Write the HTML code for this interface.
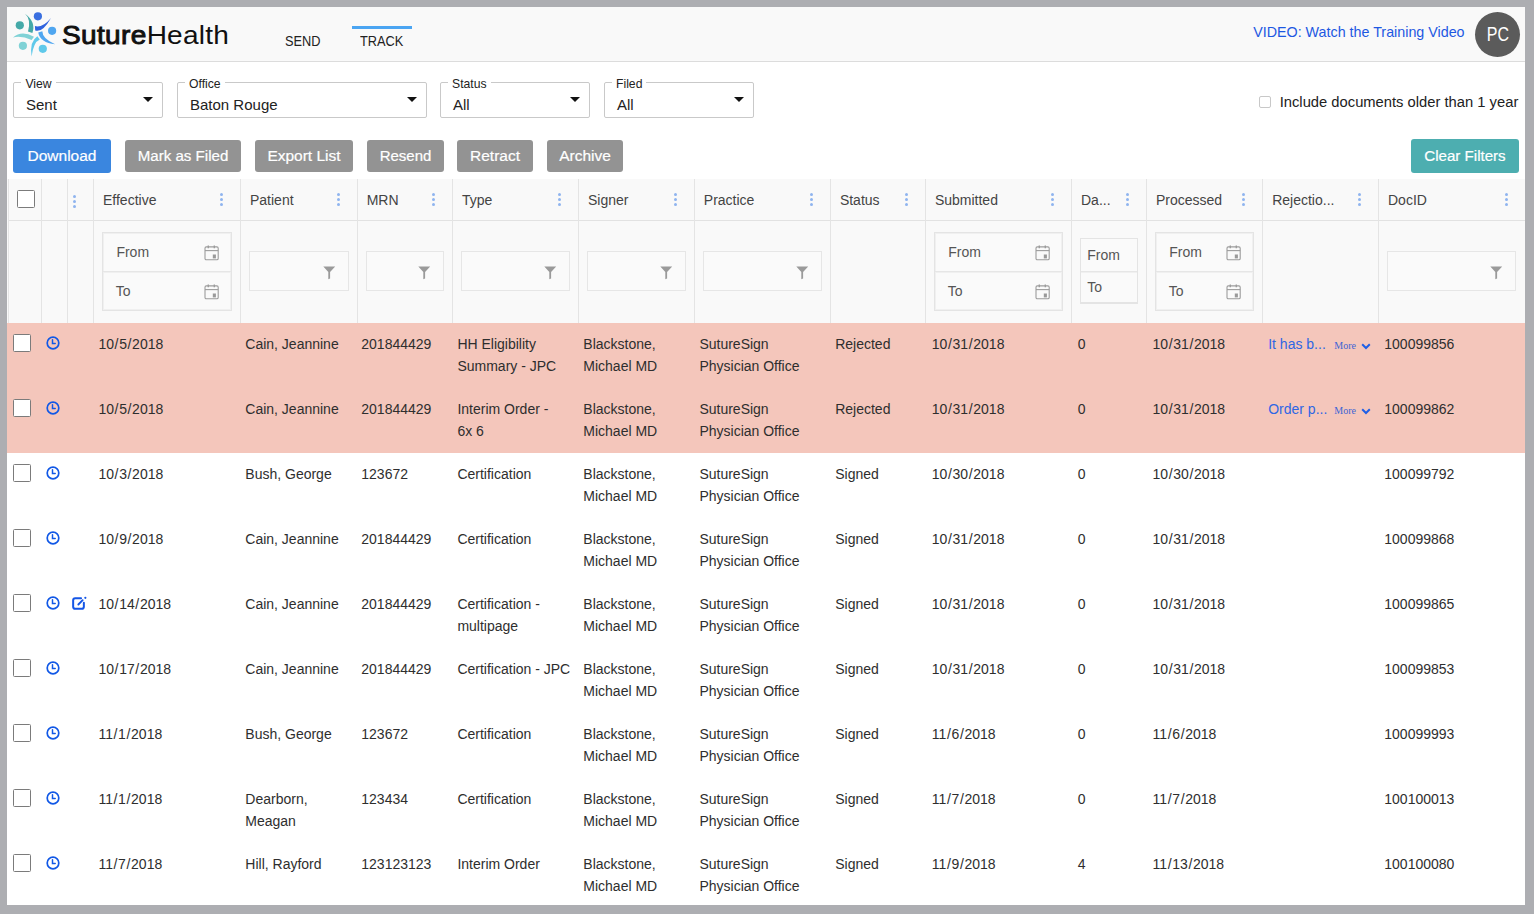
<!DOCTYPE html><html><head><meta charset="utf-8"><title>SutureHealth Track</title><style>
*{box-sizing:border-box;margin:0;padding:0}
html,body{width:1534px;height:914px;overflow:hidden;background:#adaeb2;font-family:"Liberation Sans",sans-serif;color:#333}
#pg{position:absolute;left:7px;top:7px;width:1518px;height:898px;background:#fff;overflow:hidden}
.a{position:absolute;white-space:nowrap}
.a>svg{display:block}
#hdr{position:absolute;left:0;top:0;width:1518px;height:55px;background:#f9f9f9;border-bottom:1px solid #dcdcdc}
.sel{position:absolute;height:36px;border:1px solid #c9c9c9;border-radius:2px;background:#fff}
.sel .lb{position:absolute;top:-6.5px;background:#fff;padding:0 4px;font-size:12.2px;line-height:15px;color:#222}
.sel .vl{position:absolute;top:13px;font-size:15px;line-height:18px;color:#222}
.sel .ar{position:absolute;top:14px;width:0;height:0;border-left:5px solid transparent;border-right:5px solid transparent;border-top:5.5px solid #111}
.btn{position:absolute;height:32px;top:133px;background:#939393;color:#fff;border-radius:3px;font-size:15.5px;line-height:32px;text-align:center;-webkit-text-stroke:0.2px #fff}
.vl1{position:absolute;width:1px;background:#e4e4e4}
.hl{position:absolute;color:#444;font-size:14px;line-height:20px}
.dots{position:absolute;width:3px}
.dots i{display:block;width:3px;height:3px;border-radius:50%;background:#8fb4ef;margin-bottom:2px}
.fbox{position:absolute;border:1px solid #e6e6e6;background:#fafafa}
.dbox{position:absolute;border:1px solid #e4e4e4;box-shadow:inset 0 0 0 1px #f0f0f0;background:#fafafa}
.dbox.sm{box-shadow:none;border-bottom-width:2px}
.dbox .in{position:absolute;left:0;right:0;height:1px;background:#e6e6e6;box-shadow:0 1px 0 #f0f0f0}
.dbox .t{position:absolute;font-size:14px;line-height:18px;color:#555}
.row{position:absolute;left:0;width:1518px;height:65px}
.pink{background:#f4c6bb}
.cb{position:absolute;width:18px;height:18px;border:1.6px solid #7b7b7b;border-radius:1.5px;background:#fff}
.cell{position:absolute;font-size:14px;line-height:22px;color:#2e2e2e;white-space:nowrap}
.sl{margin:0 0.65px}
.rej{color:#2f66e4}
.more{font-family:"Liberation Serif",serif;font-size:10px;color:#3d64d4}
</style></head><body><div id="pg">
<div id="hdr"></div>
<svg class="a" style="left:3px;top:3px" width="50" height="50" viewBox="0 0 50 50">
<circle cx="27.9" cy="6.3" r="4.1" fill="#3a6fe0"/>
<circle cx="9.8" cy="15.3" r="4.1" fill="#45a9a8"/>
<circle cx="42.1" cy="20.8" r="4.1" fill="#4fa6f0"/>
<circle cx="12.9" cy="35.8" r="4.1" fill="#80d2d6"/>
<circle cx="32.8" cy="38.8" r="4.1" fill="#5fc9ea"/>
<path d="M15 3.8 Q26.2 12 22.4 23 L18 21.6 Q21.3 9.1 15 3.8Z" fill="#45a9a8"/>
<path d="M41 7.9 Q32.5 23 25.2 20.5 L24.9 16.1 Q32.65 18 41 7.9Z" fill="#2f62de"/>
<path d="M45.1 34.2 Q32.5 29.05 32.3 21.3 L28.2 22.4 Q30.35 32.7 45.1 34.2Z" fill="#4fa6f0"/>
<path d="M3 27.4 Q11.7 19.9 24 26.8 L21.6 30.1 Q11.7 25.45 3 27.4Z" fill="#80d2d6"/>
<path d="M21.6 46.5 Q19.3 31.4 27.4 26.3 L29.8 29.5 Q23.5 32 21.6 46.5Z" fill="#5fc9ea"/>
</svg>
<div class="a" style="left:54.5px;top:12.5px;font-size:25.5px;line-height:30px;color:#111;transform:scaleX(1.1);transform-origin:0 0"><span style="-webkit-text-stroke:0.9px #111;letter-spacing:0.3px">Suture</span><span style="letter-spacing:0.2px">Health</span></div>
<div class="a" style="left:278px;top:25.5px;font-size:14.5px;line-height:16px;color:#222;transform:scaleX(0.88);transform-origin:0 0">SEND</div>
<div class="a" style="left:352.7px;top:25.5px;font-size:14.5px;line-height:16px;color:#222;transform:scaleX(0.88);transform-origin:0 0">TRACK</div>
<div class="a" style="left:345px;top:19px;width:60px;height:3px;background:#4ba5f2"></div>
<div class="a" style="left:1246.2px;top:15.5px;font-size:14.3px;line-height:18px;color:#1d58e2">VIDEO: Watch the Training Video</div>
<div class="a" style="left:1468px;top:5.2px;width:45px;height:45px;border-radius:50%;background:#5b5b5b;color:#fff;font-size:20px;line-height:45px;text-align:center"><span style="display:inline-block;transform:scaleX(0.8)">PC</span></div>
<div class="sel" style="left:6px;top:75px;width:150px"><div class="lb" style="left:7.4px">View</div><div class="vl" style="left:12px">Sent</div><div class="ar" style="left:129px"></div></div>
<div class="sel" style="left:170px;top:75px;width:250px"><div class="lb" style="left:7px">Office</div><div class="vl" style="left:12px">Baton Rouge</div><div class="ar" style="left:229px"></div></div>
<div class="sel" style="left:433px;top:75px;width:150px"><div class="lb" style="left:7px">Status</div><div class="vl" style="left:12px">All</div><div class="ar" style="left:129px"></div></div>
<div class="sel" style="left:597px;top:75px;width:150px"><div class="lb" style="left:7px">Filed</div><div class="vl" style="left:12px">All</div><div class="ar" style="left:129px"></div></div>
<div class="a" style="left:1252.1px;top:89px;width:12px;height:12px;border:1px solid #c8c8c8;border-radius:2px;background:#fff"></div>
<div class="a" style="left:1272.7px;top:86px;font-size:14.75px;line-height:18px;color:#222">Include documents older than 1 year</div>
<div class="btn" style="left:6px;width:98px;background:#3a86df;font-size:15.5px;height:34px;line-height:34px;top:132px;">Download</div>
<div class="btn" style="left:118px;width:116px;background:#939393;font-size:15.1px;top:133px;">Mark as Filed</div>
<div class="btn" style="left:248px;width:98px;background:#939393;font-size:15.5px;top:133px;">Export List</div>
<div class="btn" style="left:360px;width:77px;background:#939393;font-size:15px;top:133px;">Resend</div>
<div class="btn" style="left:450px;width:76px;background:#939393;font-size:15.5px;top:133px;">Retract</div>
<div class="btn" style="left:540px;width:76px;background:#939393;font-size:15.5px;top:133px;">Archive</div>
<div class="btn" style="left:1404px;width:108px;background:#4daeb0;font-size:15.1px;height:33.4px;line-height:33.4px;top:132.2px;">Clear Filters</div>
<div class="a" style="left:0px;top:172px;width:1518px;height:143.5px;background:#f9f9f9"></div>
<div class="a" style="left:1px;top:213px;width:1517px;height:1px;background:#e2e2e2"></div>
<div class="vl1" style="left:1px;top:172px;height:143.5px"></div>
<div class="vl1" style="left:34px;top:172px;height:143.5px"></div>
<div class="vl1" style="left:60px;top:172px;height:143.5px"></div>
<div class="vl1" style="left:86px;top:172px;height:143.5px"></div>
<div class="vl1" style="left:233px;top:172px;height:143.5px"></div>
<div class="vl1" style="left:350px;top:172px;height:143.5px"></div>
<div class="vl1" style="left:445px;top:172px;height:143.5px"></div>
<div class="vl1" style="left:571px;top:172px;height:143.5px"></div>
<div class="vl1" style="left:687px;top:172px;height:143.5px"></div>
<div class="vl1" style="left:823px;top:172px;height:143.5px"></div>
<div class="vl1" style="left:918px;top:172px;height:143.5px"></div>
<div class="vl1" style="left:1064px;top:172px;height:143.5px"></div>
<div class="vl1" style="left:1139px;top:172px;height:143.5px"></div>
<div class="vl1" style="left:1255px;top:172px;height:143.5px"></div>
<div class="vl1" style="left:1371px;top:172px;height:143.5px"></div>
<div class="hl" style="left:96.0px;top:183.2px">Effective</div>
<div class="hl" style="left:243.0px;top:183.2px">Patient</div>
<div class="hl" style="left:359.7px;top:183.2px">MRN</div>
<div class="hl" style="left:455.0px;top:183.2px">Type</div>
<div class="hl" style="left:581.0px;top:183.2px">Signer</div>
<div class="hl" style="left:696.8px;top:183.2px">Practice</div>
<div class="hl" style="left:832.9px;top:183.2px">Status</div>
<div class="hl" style="left:927.9px;top:183.2px">Submitted</div>
<div class="hl" style="left:1074.0px;top:183.2px">Da...</div>
<div class="hl" style="left:1148.9px;top:183.2px">Processed</div>
<div class="hl" style="left:1265.2px;top:183.2px">Rejectio...</div>
<div class="hl" style="left:1381.0px;top:183.2px">DocID</div>
<div class="dots" style="left:213.0px;top:186px"><i></i><i></i><i></i></div>
<div class="dots" style="left:329.7px;top:186px"><i></i><i></i><i></i></div>
<div class="dots" style="left:425.0px;top:186px"><i></i><i></i><i></i></div>
<div class="dots" style="left:551.0px;top:186px"><i></i><i></i><i></i></div>
<div class="dots" style="left:666.8px;top:186px"><i></i><i></i><i></i></div>
<div class="dots" style="left:802.9px;top:186px"><i></i><i></i><i></i></div>
<div class="dots" style="left:897.9px;top:186px"><i></i><i></i><i></i></div>
<div class="dots" style="left:1044.0px;top:186px"><i></i><i></i><i></i></div>
<div class="dots" style="left:1118.9px;top:186px"><i></i><i></i><i></i></div>
<div class="dots" style="left:1235.2px;top:186px"><i></i><i></i><i></i></div>
<div class="dots" style="left:1351.0px;top:186px"><i></i><i></i><i></i></div>
<div class="dots" style="left:1497.5px;top:186px"><i></i><i></i><i></i></div>
<div class="dots" style="left:66.0px;top:188px"><i></i><i></i><i></i></div>
<div class="cb" style="left:10px;top:183px"></div>
<div class="dbox" style="left:95px;top:225px;width:130px;height:79px"><div class="in" style="top:38px"></div></div>
<div class="dbox" style="left:927px;top:225px;width:129px;height:79px"><div class="in" style="top:38px"></div></div>
<div class="dbox" style="left:1148px;top:225px;width:99px;height:79px"><div class="in" style="top:38px"></div></div>
<div class="dbox sm" style="left:1073px;top:231px;width:58px;height:66px"><div class="in" style="top:31.5px"></div></div>
<div class="a" style="left:109.4px;top:236px;font-size:14px;line-height:18px;color:#555">From</div>
<div class="a" style="left:108.8px;top:274.5px;font-size:14px;line-height:18px;color:#555">To</div>
<div class="a" style="left:197.1px;top:237.5px"><svg width="15" height="16" viewBox="0 0 15 16"><rect x="1" y="1.9" width="13.2" height="12.8" rx="1.3" fill="none" stroke="#9c9c9c" stroke-width="1.1"/><path d="M1 5.6H14.2" stroke="#9c9c9c" stroke-width="1.1"/><path d="M4.3 0.6V3.2M10.3 0.6V3.2" stroke="#9c9c9c" stroke-width="1.4"/><rect x="8.8" y="9.5" width="3.1" height="3.9" fill="#9a9a9a"/></svg></div>
<div class="a" style="left:197.1px;top:276.5px"><svg width="15" height="16" viewBox="0 0 15 16"><rect x="1" y="1.9" width="13.2" height="12.8" rx="1.3" fill="none" stroke="#9c9c9c" stroke-width="1.1"/><path d="M1 5.6H14.2" stroke="#9c9c9c" stroke-width="1.1"/><path d="M4.3 0.6V3.2M10.3 0.6V3.2" stroke="#9c9c9c" stroke-width="1.4"/><rect x="8.8" y="9.5" width="3.1" height="3.9" fill="#9a9a9a"/></svg></div>
<div class="a" style="left:941.3px;top:236px;font-size:14px;line-height:18px;color:#555">From</div>
<div class="a" style="left:940.7px;top:274.5px;font-size:14px;line-height:18px;color:#555">To</div>
<div class="a" style="left:1027.9px;top:237.5px"><svg width="15" height="16" viewBox="0 0 15 16"><rect x="1" y="1.9" width="13.2" height="12.8" rx="1.3" fill="none" stroke="#9c9c9c" stroke-width="1.1"/><path d="M1 5.6H14.2" stroke="#9c9c9c" stroke-width="1.1"/><path d="M4.3 0.6V3.2M10.3 0.6V3.2" stroke="#9c9c9c" stroke-width="1.4"/><rect x="8.8" y="9.5" width="3.1" height="3.9" fill="#9a9a9a"/></svg></div>
<div class="a" style="left:1027.9px;top:276.5px"><svg width="15" height="16" viewBox="0 0 15 16"><rect x="1" y="1.9" width="13.2" height="12.8" rx="1.3" fill="none" stroke="#9c9c9c" stroke-width="1.1"/><path d="M1 5.6H14.2" stroke="#9c9c9c" stroke-width="1.1"/><path d="M4.3 0.6V3.2M10.3 0.6V3.2" stroke="#9c9c9c" stroke-width="1.4"/><rect x="8.8" y="9.5" width="3.1" height="3.9" fill="#9a9a9a"/></svg></div>
<div class="a" style="left:1162.3px;top:236px;font-size:14px;line-height:18px;color:#555">From</div>
<div class="a" style="left:1161.7px;top:274.5px;font-size:14px;line-height:18px;color:#555">To</div>
<div class="a" style="left:1219.3px;top:237.5px"><svg width="15" height="16" viewBox="0 0 15 16"><rect x="1" y="1.9" width="13.2" height="12.8" rx="1.3" fill="none" stroke="#9c9c9c" stroke-width="1.1"/><path d="M1 5.6H14.2" stroke="#9c9c9c" stroke-width="1.1"/><path d="M4.3 0.6V3.2M10.3 0.6V3.2" stroke="#9c9c9c" stroke-width="1.4"/><rect x="8.8" y="9.5" width="3.1" height="3.9" fill="#9a9a9a"/></svg></div>
<div class="a" style="left:1219.3px;top:276.5px"><svg width="15" height="16" viewBox="0 0 15 16"><rect x="1" y="1.9" width="13.2" height="12.8" rx="1.3" fill="none" stroke="#9c9c9c" stroke-width="1.1"/><path d="M1 5.6H14.2" stroke="#9c9c9c" stroke-width="1.1"/><path d="M4.3 0.6V3.2M10.3 0.6V3.2" stroke="#9c9c9c" stroke-width="1.4"/><rect x="8.8" y="9.5" width="3.1" height="3.9" fill="#9a9a9a"/></svg></div>
<div class="a" style="left:1080.2px;top:238.8px;font-size:14px;line-height:18px;color:#555">From</div>
<div class="a" style="left:1080.2px;top:271px;font-size:14px;line-height:18px;color:#555">To</div>
<div class="fbox" style="left:242px;top:244px;width:100px;height:40px"></div>
<div class="a" style="left:315.9px;top:258.5px"><svg width="13" height="14" viewBox="0 0 13 14"><path d="M0.3 0.5H12.2L7.1 6V12.4L5.3 13.2V6Z" fill="#9a9a9a"/></svg></div>
<div class="fbox" style="left:359px;top:244px;width:78px;height:40px"></div>
<div class="a" style="left:410.9px;top:258.5px"><svg width="13" height="14" viewBox="0 0 13 14"><path d="M0.3 0.5H12.2L7.1 6V12.4L5.3 13.2V6Z" fill="#9a9a9a"/></svg></div>
<div class="fbox" style="left:454px;top:244px;width:109px;height:40px"></div>
<div class="a" style="left:536.9px;top:258.5px"><svg width="13" height="14" viewBox="0 0 13 14"><path d="M0.3 0.5H12.2L7.1 6V12.4L5.3 13.2V6Z" fill="#9a9a9a"/></svg></div>
<div class="fbox" style="left:580px;top:244px;width:99px;height:40px"></div>
<div class="a" style="left:652.9px;top:258.5px"><svg width="13" height="14" viewBox="0 0 13 14"><path d="M0.3 0.5H12.2L7.1 6V12.4L5.3 13.2V6Z" fill="#9a9a9a"/></svg></div>
<div class="fbox" style="left:696px;top:244px;width:119px;height:40px"></div>
<div class="a" style="left:788.9px;top:258.5px"><svg width="13" height="14" viewBox="0 0 13 14"><path d="M0.3 0.5H12.2L7.1 6V12.4L5.3 13.2V6Z" fill="#9a9a9a"/></svg></div>
<div class="fbox" style="left:1380px;top:244px;width:129px;height:40px"></div>
<div class="a" style="left:1482.9px;top:258.5px"><svg width="13" height="14" viewBox="0 0 13 14"><path d="M0.3 0.5H12.2L7.1 6V12.4L5.3 13.2V6Z" fill="#9a9a9a"/></svg></div>
<div class="row pink" style="top:315.5px"></div>
<div class="cb" style="left:6.4px;top:326.9px"></div>
<div class="a" style="left:38.9px;top:328.9px;width:14px;height:14px"><svg width="14" height="14" viewBox="0 0 14 14"><circle cx="7" cy="7" r="5.8" fill="none" stroke="#1158e6" stroke-width="1.7"/><path d="M6.5 3.8V7.5H9.2" fill="none" stroke="#1158e6" stroke-width="1.5" stroke-linecap="round"/></svg></div>
<div class="cell" style="left:91.4px;top:326.15px">10<span class="sl">/</span>5<span class="sl">/</span>2018</div>
<div class="cell" style="left:238.3px;top:326.15px">Cain, Jeannine</div>
<div class="cell" style="left:354.3px;top:326.15px">201844429</div>
<div class="cell" style="left:450.4px;top:326.15px">HH Eligibility<br>Summary - JPC</div>
<div class="cell" style="left:576.3px;top:326.15px">Blackstone,<br>Michael MD</div>
<div class="cell" style="left:692.4px;top:326.15px">SutureSign<br>Physician Office</div>
<div class="cell" style="left:828.2px;top:326.15px">Rejected</div>
<div class="cell" style="left:924.8px;top:326.15px">10<span class="sl">/</span>31<span class="sl">/</span>2018</div>
<div class="cell" style="left:1070.7px;top:326.15px">0</div>
<div class="cell" style="left:1145.5px;top:326.15px">10<span class="sl">/</span>31<span class="sl">/</span>2018</div>
<div class="cell" style="left:1377.3px;top:326.15px">100099856</div>
<div class="cell rej" style="left:1261.2px;top:326.15px">It has b...</div>
<div class="cell more" style="left:1327.3px;top:327.5px">More</div>
<div class="a" style="left:1353.5px;top:336.0px"><svg width="10" height="7" viewBox="0 0 10 7"><path d="M1.2 1.3L5 5L8.8 1.3" fill="none" stroke="#1f5fe6" stroke-width="2"/></svg></div>
<div class="row pink" style="top:380.5px"></div>
<div class="cb" style="left:6.4px;top:391.9px"></div>
<div class="a" style="left:38.9px;top:393.9px;width:14px;height:14px"><svg width="14" height="14" viewBox="0 0 14 14"><circle cx="7" cy="7" r="5.8" fill="none" stroke="#1158e6" stroke-width="1.7"/><path d="M6.5 3.8V7.5H9.2" fill="none" stroke="#1158e6" stroke-width="1.5" stroke-linecap="round"/></svg></div>
<div class="cell" style="left:91.4px;top:391.15px">10<span class="sl">/</span>5<span class="sl">/</span>2018</div>
<div class="cell" style="left:238.3px;top:391.15px">Cain, Jeannine</div>
<div class="cell" style="left:354.3px;top:391.15px">201844429</div>
<div class="cell" style="left:450.4px;top:391.15px">Interim Order -<br>6x 6</div>
<div class="cell" style="left:576.3px;top:391.15px">Blackstone,<br>Michael MD</div>
<div class="cell" style="left:692.4px;top:391.15px">SutureSign<br>Physician Office</div>
<div class="cell" style="left:828.2px;top:391.15px">Rejected</div>
<div class="cell" style="left:924.8px;top:391.15px">10<span class="sl">/</span>31<span class="sl">/</span>2018</div>
<div class="cell" style="left:1070.7px;top:391.15px">0</div>
<div class="cell" style="left:1145.5px;top:391.15px">10<span class="sl">/</span>31<span class="sl">/</span>2018</div>
<div class="cell" style="left:1377.3px;top:391.15px">100099862</div>
<div class="cell rej" style="left:1261.2px;top:391.15px">Order p...</div>
<div class="cell more" style="left:1327.3px;top:392.5px">More</div>
<div class="a" style="left:1353.5px;top:401.0px"><svg width="10" height="7" viewBox="0 0 10 7"><path d="M1.2 1.3L5 5L8.8 1.3" fill="none" stroke="#1f5fe6" stroke-width="2"/></svg></div>
<div class="row" style="top:445.5px"></div>
<div class="cb" style="left:6.4px;top:456.9px"></div>
<div class="a" style="left:38.9px;top:458.9px;width:14px;height:14px"><svg width="14" height="14" viewBox="0 0 14 14"><circle cx="7" cy="7" r="5.8" fill="none" stroke="#1158e6" stroke-width="1.7"/><path d="M6.5 3.8V7.5H9.2" fill="none" stroke="#1158e6" stroke-width="1.5" stroke-linecap="round"/></svg></div>
<div class="cell" style="left:91.4px;top:456.15px">10<span class="sl">/</span>3<span class="sl">/</span>2018</div>
<div class="cell" style="left:238.3px;top:456.15px">Bush, George</div>
<div class="cell" style="left:354.3px;top:456.15px">123672</div>
<div class="cell" style="left:450.4px;top:456.15px">Certification</div>
<div class="cell" style="left:576.3px;top:456.15px">Blackstone,<br>Michael MD</div>
<div class="cell" style="left:692.4px;top:456.15px">SutureSign<br>Physician Office</div>
<div class="cell" style="left:828.2px;top:456.15px">Signed</div>
<div class="cell" style="left:924.8px;top:456.15px">10<span class="sl">/</span>30<span class="sl">/</span>2018</div>
<div class="cell" style="left:1070.7px;top:456.15px">0</div>
<div class="cell" style="left:1145.5px;top:456.15px">10<span class="sl">/</span>30<span class="sl">/</span>2018</div>
<div class="cell" style="left:1377.3px;top:456.15px">100099792</div>
<div class="row" style="top:510.5px"></div>
<div class="cb" style="left:6.4px;top:521.9px"></div>
<div class="a" style="left:38.9px;top:523.9px;width:14px;height:14px"><svg width="14" height="14" viewBox="0 0 14 14"><circle cx="7" cy="7" r="5.8" fill="none" stroke="#1158e6" stroke-width="1.7"/><path d="M6.5 3.8V7.5H9.2" fill="none" stroke="#1158e6" stroke-width="1.5" stroke-linecap="round"/></svg></div>
<div class="cell" style="left:91.4px;top:521.15px">10<span class="sl">/</span>9<span class="sl">/</span>2018</div>
<div class="cell" style="left:238.3px;top:521.15px">Cain, Jeannine</div>
<div class="cell" style="left:354.3px;top:521.15px">201844429</div>
<div class="cell" style="left:450.4px;top:521.15px">Certification</div>
<div class="cell" style="left:576.3px;top:521.15px">Blackstone,<br>Michael MD</div>
<div class="cell" style="left:692.4px;top:521.15px">SutureSign<br>Physician Office</div>
<div class="cell" style="left:828.2px;top:521.15px">Signed</div>
<div class="cell" style="left:924.8px;top:521.15px">10<span class="sl">/</span>31<span class="sl">/</span>2018</div>
<div class="cell" style="left:1070.7px;top:521.15px">0</div>
<div class="cell" style="left:1145.5px;top:521.15px">10<span class="sl">/</span>31<span class="sl">/</span>2018</div>
<div class="cell" style="left:1377.3px;top:521.15px">100099868</div>
<div class="row" style="top:575.5px"></div>
<div class="cb" style="left:6.4px;top:586.9px"></div>
<div class="a" style="left:38.9px;top:588.9px;width:14px;height:14px"><svg width="14" height="14" viewBox="0 0 14 14"><circle cx="7" cy="7" r="5.8" fill="none" stroke="#1158e6" stroke-width="1.7"/><path d="M6.5 3.8V7.5H9.2" fill="none" stroke="#1158e6" stroke-width="1.5" stroke-linecap="round"/></svg></div>
<div class="a" style="left:64px;top:589.0px;width:15px;height:14px"><svg width="17" height="16" viewBox="0 0 17 16"><g transform="translate(0.45,0.5)"><path d="M9.6 1.7H3.8Q1.7 1.7 1.7 3.8V10.2Q1.7 12.3 3.8 12.3H10.3Q12.4 12.3 12.4 10.2V6.2" fill="none" stroke="#1456e6" stroke-width="2" stroke-linecap="round"/><path d="M6.9 8L11.2 3.7" stroke="#1456e6" stroke-width="1.9" stroke-linecap="round"/><circle cx="13.9" cy="1.3" r="1.1" fill="#1456e6"/></g></svg></div>
<div class="cell" style="left:91.4px;top:586.15px">10<span class="sl">/</span>14<span class="sl">/</span>2018</div>
<div class="cell" style="left:238.3px;top:586.15px">Cain, Jeannine</div>
<div class="cell" style="left:354.3px;top:586.15px">201844429</div>
<div class="cell" style="left:450.4px;top:586.15px">Certification -<br>multipage</div>
<div class="cell" style="left:576.3px;top:586.15px">Blackstone,<br>Michael MD</div>
<div class="cell" style="left:692.4px;top:586.15px">SutureSign<br>Physician Office</div>
<div class="cell" style="left:828.2px;top:586.15px">Signed</div>
<div class="cell" style="left:924.8px;top:586.15px">10<span class="sl">/</span>31<span class="sl">/</span>2018</div>
<div class="cell" style="left:1070.7px;top:586.15px">0</div>
<div class="cell" style="left:1145.5px;top:586.15px">10<span class="sl">/</span>31<span class="sl">/</span>2018</div>
<div class="cell" style="left:1377.3px;top:586.15px">100099865</div>
<div class="row" style="top:640.5px"></div>
<div class="cb" style="left:6.4px;top:651.9px"></div>
<div class="a" style="left:38.9px;top:653.9px;width:14px;height:14px"><svg width="14" height="14" viewBox="0 0 14 14"><circle cx="7" cy="7" r="5.8" fill="none" stroke="#1158e6" stroke-width="1.7"/><path d="M6.5 3.8V7.5H9.2" fill="none" stroke="#1158e6" stroke-width="1.5" stroke-linecap="round"/></svg></div>
<div class="cell" style="left:91.4px;top:651.15px">10<span class="sl">/</span>17<span class="sl">/</span>2018</div>
<div class="cell" style="left:238.3px;top:651.15px">Cain, Jeannine</div>
<div class="cell" style="left:354.3px;top:651.15px">201844429</div>
<div class="cell" style="left:450.4px;top:651.15px">Certification - JPC</div>
<div class="cell" style="left:576.3px;top:651.15px">Blackstone,<br>Michael MD</div>
<div class="cell" style="left:692.4px;top:651.15px">SutureSign<br>Physician Office</div>
<div class="cell" style="left:828.2px;top:651.15px">Signed</div>
<div class="cell" style="left:924.8px;top:651.15px">10<span class="sl">/</span>31<span class="sl">/</span>2018</div>
<div class="cell" style="left:1070.7px;top:651.15px">0</div>
<div class="cell" style="left:1145.5px;top:651.15px">10<span class="sl">/</span>31<span class="sl">/</span>2018</div>
<div class="cell" style="left:1377.3px;top:651.15px">100099853</div>
<div class="row" style="top:705.5px"></div>
<div class="cb" style="left:6.4px;top:716.9px"></div>
<div class="a" style="left:38.9px;top:718.9px;width:14px;height:14px"><svg width="14" height="14" viewBox="0 0 14 14"><circle cx="7" cy="7" r="5.8" fill="none" stroke="#1158e6" stroke-width="1.7"/><path d="M6.5 3.8V7.5H9.2" fill="none" stroke="#1158e6" stroke-width="1.5" stroke-linecap="round"/></svg></div>
<div class="cell" style="left:91.4px;top:716.15px">11<span class="sl">/</span>1<span class="sl">/</span>2018</div>
<div class="cell" style="left:238.3px;top:716.15px">Bush, George</div>
<div class="cell" style="left:354.3px;top:716.15px">123672</div>
<div class="cell" style="left:450.4px;top:716.15px">Certification</div>
<div class="cell" style="left:576.3px;top:716.15px">Blackstone,<br>Michael MD</div>
<div class="cell" style="left:692.4px;top:716.15px">SutureSign<br>Physician Office</div>
<div class="cell" style="left:828.2px;top:716.15px">Signed</div>
<div class="cell" style="left:924.8px;top:716.15px">11<span class="sl">/</span>6<span class="sl">/</span>2018</div>
<div class="cell" style="left:1070.7px;top:716.15px">0</div>
<div class="cell" style="left:1145.5px;top:716.15px">11<span class="sl">/</span>6<span class="sl">/</span>2018</div>
<div class="cell" style="left:1377.3px;top:716.15px">100099993</div>
<div class="row" style="top:770.5px"></div>
<div class="cb" style="left:6.4px;top:781.9px"></div>
<div class="a" style="left:38.9px;top:783.9px;width:14px;height:14px"><svg width="14" height="14" viewBox="0 0 14 14"><circle cx="7" cy="7" r="5.8" fill="none" stroke="#1158e6" stroke-width="1.7"/><path d="M6.5 3.8V7.5H9.2" fill="none" stroke="#1158e6" stroke-width="1.5" stroke-linecap="round"/></svg></div>
<div class="cell" style="left:91.4px;top:781.15px">11<span class="sl">/</span>1<span class="sl">/</span>2018</div>
<div class="cell" style="left:238.3px;top:781.15px">Dearborn,<br>Meagan</div>
<div class="cell" style="left:354.3px;top:781.15px">123434</div>
<div class="cell" style="left:450.4px;top:781.15px">Certification</div>
<div class="cell" style="left:576.3px;top:781.15px">Blackstone,<br>Michael MD</div>
<div class="cell" style="left:692.4px;top:781.15px">SutureSign<br>Physician Office</div>
<div class="cell" style="left:828.2px;top:781.15px">Signed</div>
<div class="cell" style="left:924.8px;top:781.15px">11<span class="sl">/</span>7<span class="sl">/</span>2018</div>
<div class="cell" style="left:1070.7px;top:781.15px">0</div>
<div class="cell" style="left:1145.5px;top:781.15px">11<span class="sl">/</span>7<span class="sl">/</span>2018</div>
<div class="cell" style="left:1377.3px;top:781.15px">100100013</div>
<div class="row" style="top:835.5px"></div>
<div class="cb" style="left:6.4px;top:846.9px"></div>
<div class="a" style="left:38.9px;top:848.9px;width:14px;height:14px"><svg width="14" height="14" viewBox="0 0 14 14"><circle cx="7" cy="7" r="5.8" fill="none" stroke="#1158e6" stroke-width="1.7"/><path d="M6.5 3.8V7.5H9.2" fill="none" stroke="#1158e6" stroke-width="1.5" stroke-linecap="round"/></svg></div>
<div class="cell" style="left:91.4px;top:846.15px">11<span class="sl">/</span>7<span class="sl">/</span>2018</div>
<div class="cell" style="left:238.3px;top:846.15px">Hill, Rayford</div>
<div class="cell" style="left:354.3px;top:846.15px">123123123</div>
<div class="cell" style="left:450.4px;top:846.15px">Interim Order</div>
<div class="cell" style="left:576.3px;top:846.15px">Blackstone,<br>Michael MD</div>
<div class="cell" style="left:692.4px;top:846.15px">SutureSign<br>Physician Office</div>
<div class="cell" style="left:828.2px;top:846.15px">Signed</div>
<div class="cell" style="left:924.8px;top:846.15px">11<span class="sl">/</span>9<span class="sl">/</span>2018</div>
<div class="cell" style="left:1070.7px;top:846.15px">4</div>
<div class="cell" style="left:1145.5px;top:846.15px">11<span class="sl">/</span>13<span class="sl">/</span>2018</div>
<div class="cell" style="left:1377.3px;top:846.15px">100100080</div>
</div></body></html>
